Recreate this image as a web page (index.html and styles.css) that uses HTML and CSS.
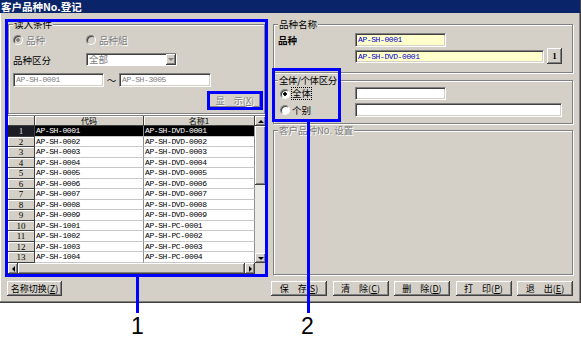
FILE: index.html
```html
<!DOCTYPE html>
<html lang="zh-CN">
<head>
    <meta charset="UTF-8">
    <meta name="viewport" content="width=device-width, initial-scale=1.0">
    <title>客户品种No.登记</title>
    <link rel="stylesheet" href="styles.css">
</head>
<body>
    <div class="window">
        <div class="titlebar">客户品种No.登记</div>
        <div class="client">
            <div class="main">
                <div class="left">
                    <fieldset class="group read">
                        <legend>读入条件</legend>
                        <div class="row radios">
                            <span class="opt opt-first disabled"><span class="rb on"></span>品种</span>
                            <span class="opt disabled"><span class="rb"></span>品种組</span>
                        </div>
                        <div class="row kind">
                            <span class="lbl">品种区分</span>
                            <div class="combo">
                                <span class="val">全部</span>
                                <span class="drop raised"><span class="tri-down gray"></span></span>
                            </div>
                        </div>
                        <div class="row range">
                            <div class="edit mono gray">AP-SH-0001</div>
                            <span class="tilde">〜</span>
                            <div class="edit mono gray wide">AP-SH-3005</div>
                        </div>
                        <div class="row btns">
                            <button class="btn raised show" disabled>显　示(<u>X</u>)</button>
                        </div>
                    </fieldset>

                    <div class="grid">
                        <div class="grid-body">
                            <div class="table">
                                <div class="hd"></div><div class="hd">代码</div><div class="hd">名称1</div>
                                <div class="num sel">1</div><div class="cell sel">AP-SH-0001</div><div class="cell sel">AP-SH-DVD-0001</div>
                                <div class="num">2</div><div class="cell">AP-SH-0002</div><div class="cell">AP-SH-DVD-0002</div>
                                <div class="num">3</div><div class="cell">AP-SH-0003</div><div class="cell">AP-SH-DVD-0003</div>
                                <div class="num">4</div><div class="cell">AP-SH-0004</div><div class="cell">AP-SH-DVD-0004</div>
                                <div class="num">5</div><div class="cell">AP-SH-0005</div><div class="cell">AP-SH-DVD-0005</div>
                                <div class="num">6</div><div class="cell">AP-SH-0006</div><div class="cell">AP-SH-DVD-0006</div>
                                <div class="num">7</div><div class="cell">AP-SH-0007</div><div class="cell">AP-SH-DVD-0007</div>
                                <div class="num">8</div><div class="cell">AP-SH-0008</div><div class="cell">AP-SH-DVD-0008</div>
                                <div class="num">9</div><div class="cell">AP-SH-0009</div><div class="cell">AP-SH-DVD-0009</div>
                                <div class="num">10</div><div class="cell">AP-SH-1001</div><div class="cell">AP-SH-PC-0001</div>
                                <div class="num">11</div><div class="cell">AP-SH-1002</div><div class="cell">AP-SH-PC-0002</div>
                                <div class="num">12</div><div class="cell">AP-SH-1003</div><div class="cell">AP-SH-PC-0003</div>
                                <div class="num">13</div><div class="cell">AP-SH-1004</div><div class="cell">AP-SH-PC-0004</div>
                            </div>
                            <div class="vscroll">
                                <span class="sb-btn raised"><span class="tri-up"></span></span>
                                <span class="sb-thumb raised"></span>
                                <span class="sb-track"></span>
                                <span class="sb-btn raised"><span class="tri-down"></span></span>
                            </div>
                        </div>
                        <div class="hscroll">
                            <span class="sb-btn raised"><span class="tri-left"></span></span>
                            <span class="sb-thumb raised"></span>
                            <span class="sb-btn raised"><span class="tri-right"></span></span>
                            <span class="sb-corner"></span>
                        </div>
                    </div>
                </div>

                <div class="right">
                    <fieldset class="group name">
                        <legend>品种名称</legend>
                        <div class="row n1">
                            <span class="lbl2 strong">品种</span>
                            <div class="edit mono yellow">AP-SH-0001</div>
                        </div>
                        <div class="row n2">
                            <div class="edit mono yellow long">AP-SH-DVD-0001</div>
                            <button class="btn raised tiny">1</button>
                        </div>
                    </fieldset>

                    <fieldset class="group scope">
                        <legend>全体/个体区分</legend>
                        <div class="row s1">
                            <span class="opt2"><span class="rb on"></span><span class="focus">全体</span></span>
                            <div class="edit"></div>
                        </div>
                        <div class="row s2">
                            <span class="opt2"><span class="rb"></span>个别</span>
                            <div class="edit longer"></div>
                        </div>
                    </fieldset>

                    <fieldset class="group setting">
                        <legend class="disabled">客户品种No. 设置</legend>
                    </fieldset>
                </div>
            </div>

            <div class="bottom">
                <button class="btn raised rename">名称切换(<u>Z</u>)</button>
                <div class="actions">
                    <button class="btn raised">保　存(<u>S</u>)</button>
                    <button class="btn raised">清　除(<u>C</u>)</button>
                    <button class="btn raised">删　除(<u>D</u>)</button>
                    <button class="btn raised">打　印(<u>P</u>)</button>
                    <button class="btn raised">退　出(<u>E</u>)</button>
                </div>
            </div>
        </div>
    </div>

    <!-- callouts drawn over the screenshot -->
    <div class="mark mark-left"></div>
    <div class="mark mark-show"></div>
    <div class="mark mark-scope"></div>
    <div class="lead lead-1"></div>
    <div class="lead lead-2"></div>
    <div class="callout-num num-1">1</div>
    <div class="callout-num num-2">2</div>
</body>
</html>
```

FILE: styles.css
```css
body {
    margin: 0;
    background: #fff;
    font-family: "Noto Sans CJK SC", sans-serif;
    font-size: 9.5px;
    line-height: 12px;
    color: #000;
}
.window {
    width: 581px;
    height: 303px;
    box-sizing: border-box;
    background: #d4d0c8;
    border-right: 1px solid #404040;
    border-bottom: 1px solid #404040;
    box-shadow: inset -1px -1px #808080, inset 1px 0 #fff;
}
.titlebar {
    height: 13px;
    background: #0a246a;
    color: #fff;
    font-weight: bold;
    font-size: 10.5px;
    line-height: 13px;
    padding-left: 1px;
    overflow: hidden;
}
.client {
    padding: 6px 6px 0 7px;
}
.main {
    display: flex;
    gap: 6px;
    height: 262px;
}
.left {
    width: 260px;
}
.right {
    width: 301px;
    display: flex;
    flex-direction: column;
}

/* group boxes */
.group {
    margin: 0;
    padding: 0 4px;
    border: 1px solid #808080;
    box-shadow: inset 1px 1px #fff, 1px 1px #fff;
    box-sizing: border-box;
    min-width: 0;
}
.group legend {
    padding: 0 1px;
    font-size: 9.5px;
    line-height: 10px;
    background: #d4d0c8;
}
.scope legend {
    letter-spacing: -0.4px;
}
.read {
    margin-left: 1px;
    width: 257px;
    height: 95px;
    padding-right: 3px;
}
.right .group {
    width: 300px;
}
.name {
    height: 54px;
}
.scope {
    margin-top: 2px;
    height: 49px;
}
.setting {
    margin-top: 1px;
    height: 150px;
}

.row {
    display: flex;
    align-items: center;
}
.disabled {
    color: #808080;
    text-shadow: 1px 1px #fff;
}
.gray {
    color: #808080;
}
.strong {
    font-weight: bold;
}
.mono {
    font-family: "Liberation Mono", monospace;
    font-size: 8px;
    letter-spacing: -0.4px;
}

/* radios */
.radios {
    margin-top: 6px;
    height: 10px;
}
.opt {
    display: flex;
    align-items: center;
    gap: 3px;
}
.opt-first {
    width: 73px;
}
.rb {
    width: 10px;
    height: 10px;
    box-sizing: border-box;
    border-radius: 50%;
    border: 1px solid;
    border-color: #808080 #fff #fff #808080;
    background: #fff;
    box-shadow: inset 1px 1px #404040;
    flex: none;
}
.rb.on {
    background: radial-gradient(circle, #000 0 1.5px, #fff 2px);
}
.disabled .rb {
    background: #d4d0c8;
}
.disabled .rb.on {
    background: radial-gradient(circle, #808080 0 1.5px, #d4d0c8 2px);
}

/* fields */
.kind {
    margin-top: 8px;
    height: 13px;
}
.lbl {
    width: 73px;
}
.combo {
    width: 91px;
    height: 13px;
    box-sizing: border-box;
    display: flex;
    align-items: center;
    background: #fff;
    border: 1px solid;
    border-color: #808080 #fff #fff #808080;
    box-shadow: inset 1px 1px #404040;
}
.combo .val {
    flex: 1;
    color: #808080;
    padding-left: 2px;
    line-height: 11px;
}
.drop {
    width: 10px;
    height: 11px;
    display: flex;
    align-items: center;
    justify-content: center;
}
.edit {
    width: 91px;
    height: 14px;
    box-sizing: border-box;
    background: #fff;
    border: 1px solid;
    border-color: #808080 #fff #fff #808080;
    box-shadow: inset 1px 1px #404040, inset -1px -1px #d4d0c8;
    padding-left: 2px;
    line-height: 12px;
    white-space: nowrap;
}
.edit.wide {
    width: 92px;
}
.range {
    margin-top: 7px;
    height: 14px;
}
.tilde {
    width: 15px;
    text-align: center;
}
.btns {
    margin-top: 6px;
    justify-content: flex-end;
}

/* buttons */
.btn {
    border: none;
    padding: 0;
    margin: 0;
    font-family: inherit;
    font-size: 9px;
    line-height: 13px;
    color: #000;
    white-space: nowrap;
    overflow: hidden;
}
.btn:disabled {
    color: #808080;
    text-shadow: 1px 1px #fff;
}
.raised {
    background: #d4d0c8;
    box-shadow: inset -1px -1px #404040, inset 1px 1px #fff, inset -2px -2px #808080;
}
.show {
    width: 52px;
    height: 15px;
}

/* grid */
.grid {
    margin-top: 1px;
    width: 260px;
    height: 160px;
    box-sizing: border-box;
    border: 1px solid;
    border-color: #808080 #fff #fff #808080;
}
.grid-body {
    display: flex;
    height: 147px;
}
.table {
    display: grid;
    grid-template-columns: 27px 109px 111px;
    grid-template-rows: 10px;
    grid-auto-rows: 10.5px;
    background: #fff;
}
.hd, .num {
    background: #d4d0c8;
    border-right: 1px solid #404040;
    border-bottom: 1px solid #404040;
    box-shadow: inset 1px 1px #fff;
    box-sizing: border-box;
    text-align: center;
}
.hd {
    font-size: 8px;
    line-height: 9px;
}
.num {
    font-family: "Liberation Serif", serif;
    font-size: 9px;
    line-height: 10px;
    overflow: hidden;
}
.num.sel {
    background: #1c1c24;
    color: #e0e0e0;
    box-shadow: none;
}
.cell {
    border-right: 1px solid #909090;
    border-bottom: 1px solid #c8c8c8;
    box-sizing: border-box;
    padding-left: 1px;
    font-family: "Liberation Mono", monospace;
    font-size: 8px;
    letter-spacing: -0.4px;
    line-height: 10px;
    white-space: nowrap;
    overflow: hidden;
}
.cell.sel {
    background: #000;
    color: #fff;
}
.vscroll {
    width: 11px;
    display: flex;
    flex-direction: column;
}
.sb-btn {
    display: flex;
    align-items: center;
    justify-content: center;
    flex: none;
}
.vscroll .sb-btn {
    height: 10px;
}
.vscroll .sb-thumb {
    height: 59px;
}
.sb-track {
    flex: 1;
    background: #ebe9e4;
}
.hscroll {
    display: flex;
    height: 11px;
}
.hscroll .sb-btn {
    width: 10px;
}
.hscroll .sb-thumb {
    flex: 1;
}
.sb-corner {
    width: 11px;
    background: #d4d0c8;
}
.tri-up, .tri-down {
    width: 0;
    height: 0;
    border-left: 3px solid transparent;
    border-right: 3px solid transparent;
}
.tri-up {
    border-bottom: 3px solid #000;
}
.tri-down {
    border-top: 3px solid #000;
}
.tri-down.gray {
    border-top-color: #808080;
}
.tri-left, .tri-right {
    width: 0;
    height: 0;
    border-top: 3px solid transparent;
    border-bottom: 3px solid transparent;
}
.tri-left {
    border-right: 3px solid #000;
}
.tri-right {
    border-left: 3px solid #000;
}

/* right side */
.n1 {
    margin-top: 4px;
    height: 14px;
}
.lbl2 {
    width: 77px;
}
.yellow {
    background: #ffffcc;
    color: #0000cc;
}
.n2 {
    margin-top: 1px;
    height: 16px;
    padding-left: 77px;
}
.edit.long {
    width: 189px;
    height: 13px;
    line-height: 11px;
}
.tiny {
    width: 15px;
    height: 16px;
    margin-left: 3px;
    font-weight: bold;
    font-family: "Liberation Serif", serif;
}
.s1 {
    margin-top: 2px;
    height: 13px;
}
.s1 .edit {
    height: 13px;
}
.s2 {
    margin-top: 3px;
    height: 14px;
}
.edit.longer {
    width: 207px;
}
.opt2 {
    width: 77px;
    box-sizing: border-box;
    padding-left: 2px;
    display: flex;
    align-items: center;
    gap: 2px;
}
.focus {
    outline: 1px dotted #000;
    line-height: 11px;
}

/* bottom buttons */
.bottom {
    display: flex;
    height: 15px;
}
.bottom .btn {
    height: 15px;
}
.rename {
    width: 55px;
}
.actions {
    margin-left: 209px;
    display: flex;
    gap: 5.5px;
}
.actions .btn {
    width: 56px;
}

/* callouts */
.mark {
    position: absolute;
    border: 3px solid #0000ff;
    box-sizing: border-box;
}
.mark-left {
    left: 5px;
    top: 19px;
    width: 263px;
    height: 258px;
}
.mark-show {
    left: 207px;
    top: 91px;
    width: 56px;
    height: 19px;
}
.mark-scope {
    left: 272px;
    top: 68px;
    width: 69px;
    height: 54px;
}
.lead {
    position: absolute;
    width: 3px;
    background: #0000ff;
}
.lead-1 {
    left: 136px;
    top: 277px;
    height: 36px;
}
.lead-2 {
    left: 307px;
    top: 122px;
    height: 191px;
}
.callout-num {
    position: absolute;
    top: 315px;
    font-family: "Liberation Sans", Arial, sans-serif;
    font-size: 23px;
    line-height: 23px;
}
.num-1 {
    left: 131px;
}
.num-2 {
    left: 301px;
}
```
